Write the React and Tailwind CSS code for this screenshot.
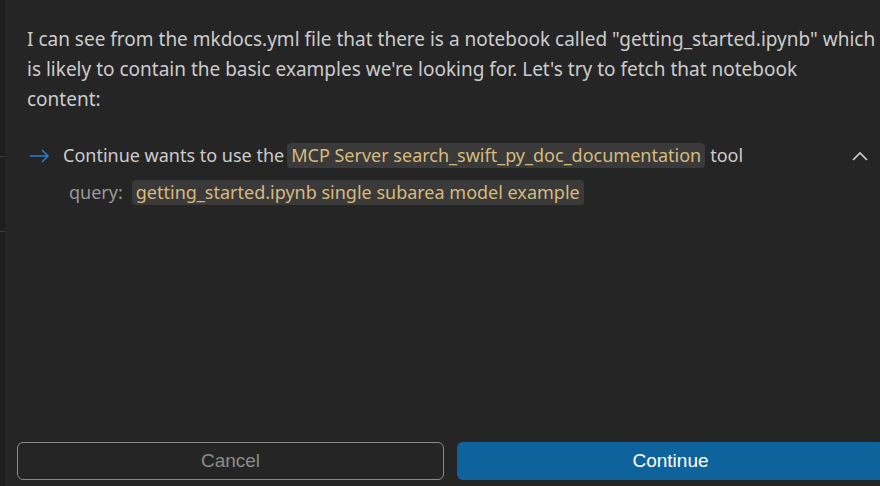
export default function App() {
  return (
    <div className="w-[880px] h-[486px] bg-[#252525] flex overflow-hidden" style={{ fontFamily: '"Noto Sans", "Open Sans", sans-serif' }}>
      <div className="w-[5px] shrink-0 bg-[#1e1e1e] flex flex-col">
        <div className="h-[156px]" />
        <div className="h-px bg-[#3e3e3e]" />
        <div className="h-[74px]" />
        <div className="h-px bg-[#3e3e3e]" />
      </div>
      <div className="flex-1 flex flex-col min-w-0">
        <div className="pl-[22px] pr-[4px] pt-[24px] text-[19px] leading-[30px] text-[#cccccc]">
          I can see from the mkdocs.yml file that there is a notebook called "getting_started.ipynb" which is likely to contain the basic examples we're looking for. Let's try to fetch that notebook<br />content:
        </div>
        <div className="mt-[28px] pl-[25px] pr-[12px] flex items-center text-[18px] text-[#cccccc]">
          <svg width="20" height="14" viewBox="0 0 20 14" className="shrink-0">
            <path d="M0 7 H18 M12 1 L18 7 L12 13" stroke="#2a7fc9" strokeWidth="1.5" fill="none" />
          </svg>
          <span className="ml-[13px]">Continue wants to use the</span>
          <span className="ml-[3px] bg-[#3a3a3a] text-[#d7ba7d] rounded-[4px] px-[4px] leading-[25px]">MCP Server search_swift_py_doc_documentation</span>
          <span className="ml-[5px]">tool</span>
          <svg width="16" height="10" viewBox="0 0 16 10" className="ml-auto shrink-0">
            <path d="M1 9 L8 2 L15 9" stroke="#d0d0d0" strokeWidth="1.6" fill="none" />
          </svg>
        </div>
        <div className="mt-[10px] pl-[64px] flex items-center text-[18px]">
          <span className="text-[#9a9a9a]">query:</span>
          <span className="ml-[9px] bg-[#3a3a3a] text-[#d7ba7d] rounded-[4px] px-[4px] leading-[25px]">getting_started.ipynb single subarea model example</span>
        </div>
        <div className="flex-1" />
        <div className="flex gap-[13px] pl-[12px] pb-[6px] -mr-[4px]" style={{ fontFamily: '"Liberation Sans", Arial, sans-serif' }}>
          <button className="w-[427px] h-[38px] border border-[#8a8a8a] rounded-[6px] text-[#8c8c8c] text-[19px]">Cancel</button>
          <button className="flex-1 h-[38px] bg-[#0f639c] rounded-[6px] text-white text-[19px]">Continue</button>
        </div>
      </div>
    </div>
  );
}
